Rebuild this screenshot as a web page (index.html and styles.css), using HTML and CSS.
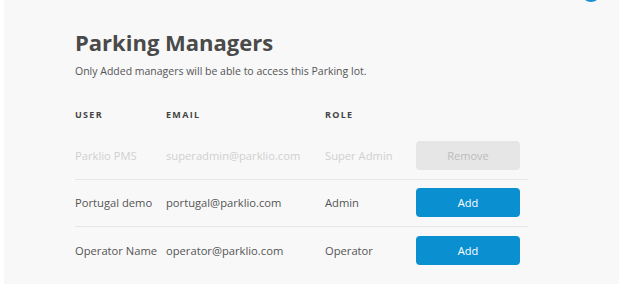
FILE: index.html
```html
<!DOCTYPE html>
<html lang="en">
<head>
  <meta charset="UTF-8" />
  <title>Parking Managers</title>
  <link rel="stylesheet" href="styles.css">
</head>
<body>
  <div class="panel">
    <span class="avatar"></span>
    <h1>Parking Managers</h1>
    <p class="note">Only Added managers will be able to access this Parking lot.</p>

    <div class="table">
      <div class="row head">
        <div>USER</div>
        <div>EMAIL</div>
        <div>ROLE</div>
        <div></div>
      </div>
      <div class="row muted">
        <div>Parklio PMS</div>
        <div>superadmin@parklio.com</div>
        <div>Super Admin</div>
        <div><button class="btn btn-off">Remove</button></div>
      </div>
      <div class="row">
        <div>Portugal demo</div>
        <div>portugal@parklio.com</div>
        <div>Admin</div>
        <div><button class="btn">Add</button></div>
      </div>
      <div class="row last">
        <div>Operator Name</div>
        <div>operator@parklio.com</div>
        <div>Operator</div>
        <div><button class="btn">Add</button></div>
      </div>
    </div>
  </div>
</body>
</html>
```

FILE: styles.css
```css
body {
  margin: 0;
  background: #ffffff;
  font-family: "Open Sans", Arial, sans-serif;
  color: #555;
}
.panel {
  position: relative;
  margin: 0 0 0 4px;
  height: 284px;
  background: #f8f8f8;
  padding: 0 0 0 71px;
  box-sizing: border-box;
  overflow: hidden;
}
.avatar {
  position: absolute;
  top: -18px;
  left: 577px;
  width: 20px;
  height: 20px;
  border-radius: 50%;
  background: #1a8fd0;
}
h1 {
  margin: 0;
  padding-top: 27px;
  font-family: "Open Sans", sans-serif;
  font-weight: 700;
  font-size: 22px;
  line-height: 30px;
  color: #4a4a4a;
}
.note {
  margin: 7px 0 0;
  font-size: 10.5px;
  line-height: 14px;
  color: #555;
}
.table {
  width: 453px;
  margin-top: 19px;
}
.row {
  display: grid;
  grid-template-columns: 91px 159px 91px 104px;
  align-items: center;
  height: 46.5px;
  border-bottom: 1px solid #e6e6e6;
  font-size: 11.2px;
}
.row.head {
  height: 35px;
  border-bottom: none;
  font-size: 9px;
  font-weight: 700;
  letter-spacing: 1.3px;
  color: #444;
}
.row.last {
  border-bottom: none;
}
.row.muted {
  color: #d0d0d0;
}
.btn {
  width: 104px;
  height: 29px;
  border: none;
  border-radius: 4px;
  background: #0a8fd0;
  color: #fff;
  font-family: "Open Sans", sans-serif;
  font-size: 11px;
}
.btn-off {
  background: #e6e6e6;
  color: #bbb;
}
```
